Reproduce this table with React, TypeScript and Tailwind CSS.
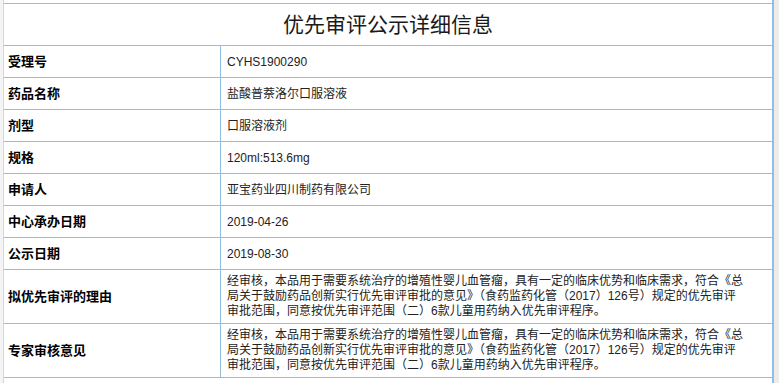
const rows: { label: string; value: string }[] = [
  { label: '受理号', value: 'CYHS1900290' },
  { label: '药品名称', value: '盐酸普萘洛尔口服溶液' },
  { label: '剂型', value: '口服溶液剂' },
  { label: '规格', value: '120ml:513.6mg' },
  { label: '申请人', value: '亚宝药业四川制药有限公司' },
  { label: '中心承办日期', value: '2019-04-26' },
  { label: '公示日期', value: '2019-08-30' },
];

const opinion = [
  '经审核，本品用于需要系统治疗的增殖性婴儿血管瘤，具有一定的临床优势和临床需求，符合《总',
  '局关于鼓励药品创新实行优先审评审批的意见》（食药监药化管（2017）126号）规定的优先审评',
  '审批范围，同意按优先审评范围（二）6款儿童用药纳入优先审评程序。',
];

export default function App() {
  return (
    <div className="flex h-[383px] w-[779px] bg-white font-['Liberation_Sans','Noto_Sans_CJK_SC',sans-serif] text-[#222]">
      {/* left edge */}
      <div className="w-[3px] shrink-0 border-r border-[#d6d6d6] bg-[#f4f4f4] box-content" />

      {/* table */}
      <div className="flex w-[770px] shrink-0 flex-col border-r-2 border-[#93bde3] pt-[3px]">
        <div className="flex h-[43px] items-center justify-center border-y border-[#93bde3] text-[21px] leading-none text-[#1a1a1a]">
          优先审评公示详细信息
        </div>

        {rows.map((r) => (
          <Row key={r.label} label={r.label}>
            <span className="text-[12px]">{r.value}</span>
          </Row>
        ))}

        <Row label="拟优先审评的理由" tall>
          <Lines />
        </Row>
        <Row label="专家审核意见" tall>
          <Lines />
        </Row>
      </div>

      {/* right edge */}
      <div className="flex-1 bg-[#ececec]" />
    </div>
  );
}

function Row({
  label,
  tall,
  children,
}: {
  label: string;
  tall?: boolean;
  children: React.ReactNode;
}) {
  return (
    <div className={`flex border-b border-[#93bde3] ${tall ? 'h-[54px]' : 'h-[32px]'}`}>
      <div className="flex w-[217px] shrink-0 items-center border-r border-[#93bde3] pl-[4px] text-[13px] font-bold text-black">
        {label}
      </div>
      <div className="flex flex-1 items-center pl-[6px]">{children}</div>
    </div>
  );
}

function Lines() {
  return (
    <div className="text-[12px] leading-[15px]">
      {opinion.map((l) => (
        <div key={l} className="whitespace-nowrap">
          {l}
        </div>
      ))}
    </div>
  );
}
